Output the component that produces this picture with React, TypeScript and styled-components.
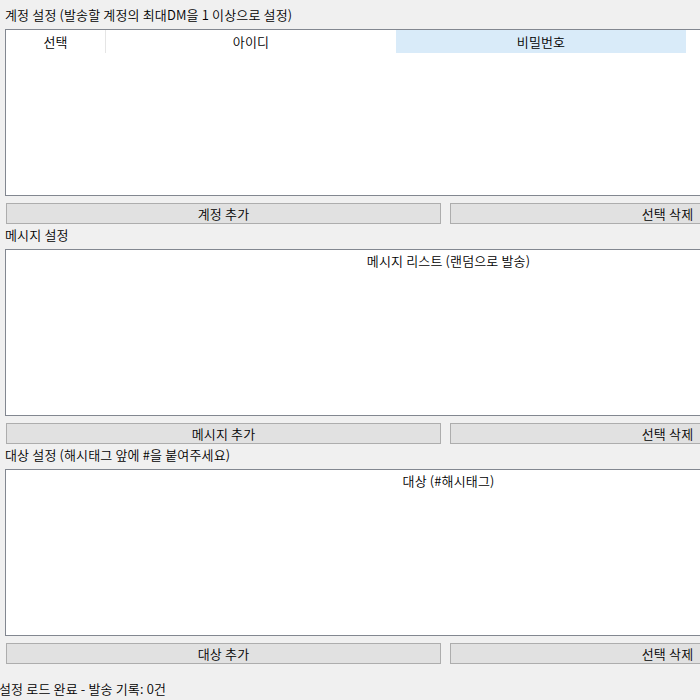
import React from "react";
import styled, { createGlobalStyle } from "styled-components";

const Global = createGlobalStyle`
  html, body {
    margin: 0;
    padding: 0;
    background: #f0f0f0;
    overflow: hidden;
  }
  body {
    font-family: "Noto Sans CJK KR", "Noto Sans", sans-serif;
    font-size: 13px;
    font-weight: 350;
    letter-spacing: 0.15px;
    color: #000;
  }
`;

const Viewport = styled.div`
  width: 700px;
  height: 700px;
  overflow: hidden;
`;

const Window = styled.div`
  width: 892px;
  height: 700px;
  padding: 4px 0 0 5px;
  box-sizing: border-box;
  background: #f0f0f0;
  display: flex;
  flex-direction: column;
`;

const Section = styled.section`
  display: flex;
  flex-direction: column;
`;

const Label = styled.div`
  height: 25px;
  line-height: 22px;
  white-space: nowrap;
`;

const ListBox = styled.div`
  height: 167px;
  box-sizing: border-box;
  border: 1px solid #828790;
  background: #fff;
  display: flex;
  flex-direction: column;
`;

const HeaderRow = styled.div`
  display: flex;
  height: 23px;
`;

const HeaderCell = styled.div<{ $w: number; $hot?: boolean; $sep?: boolean }>`
  width: ${(p) => p.$w}px;
  flex: none;
  box-sizing: border-box;
  display: flex;
  align-items: center;
  justify-content: center;
  background: ${(p) => (p.$hot ? "#d9ebf9" : "#fff")};
  border-right: ${(p) => (p.$sep ? "1px solid #e5e5e5" : "none")};
  line-height: 1;
`;

const ListTitle = styled.div`
  text-align: center;
  height: 23px;
  line-height: 22px;
  white-space: nowrap;
`;

const ButtonRow = styled.div`
  display: flex;
  gap: 9px;
  margin: 7px 0 0 1px;
`;

const Button = styled.button`
  width: 435px;
  height: 21px;
  box-sizing: border-box;
  border: 1px solid #adadad;
  background: #e1e1e1;
  font-family: inherit;
  font-size: 13px;
  font-weight: 350;
  letter-spacing: 0.15px;
  color: #000;
  padding: 0;
  line-height: 1;
`;

const Status = styled.div`
  margin-left: -6px;
  height: 50px;
  line-height: 50px;
  white-space: nowrap;
`;

const Sec: React.FC<{ label: string; add: string; children: React.ReactNode }> = ({
  label,
  add,
  children,
}) => (
  <Section>
    <Label>{label}</Label>
    <ListBox>{children}</ListBox>
    <ButtonRow>
      <Button>{add}</Button>
      <Button>선택 삭제</Button>
    </ButtonRow>
  </Section>
);

export default function App() {
  return (
    <>
      <Global />
      <Viewport>
        <Window>
          <Sec label="계정 설정 (발송할 계정의 최대DM을 1 이상으로 설정)" add="계정 추가">
            <HeaderRow>
              <HeaderCell $w={100} $sep>선택</HeaderCell>
              <HeaderCell $w={290}>아이디</HeaderCell>
              <HeaderCell $w={290} $hot>비밀번호</HeaderCell>
            </HeaderRow>
          </Sec>
          <Sec label="메시지 설정" add="메시지 추가">
            <ListTitle>메시지 리스트 (랜덤으로 발송)</ListTitle>
          </Sec>
          <Sec label="대상 설정 (해시태그 앞에 #을 붙여주세요)" add="대상 추가">
            <ListTitle>대상 (#해시태그)</ListTitle>
          </Sec>
          <Status>설정 로드 완료 - 발송 기록: 0건</Status>
        </Window>
      </Viewport>
    </>
  );
}
